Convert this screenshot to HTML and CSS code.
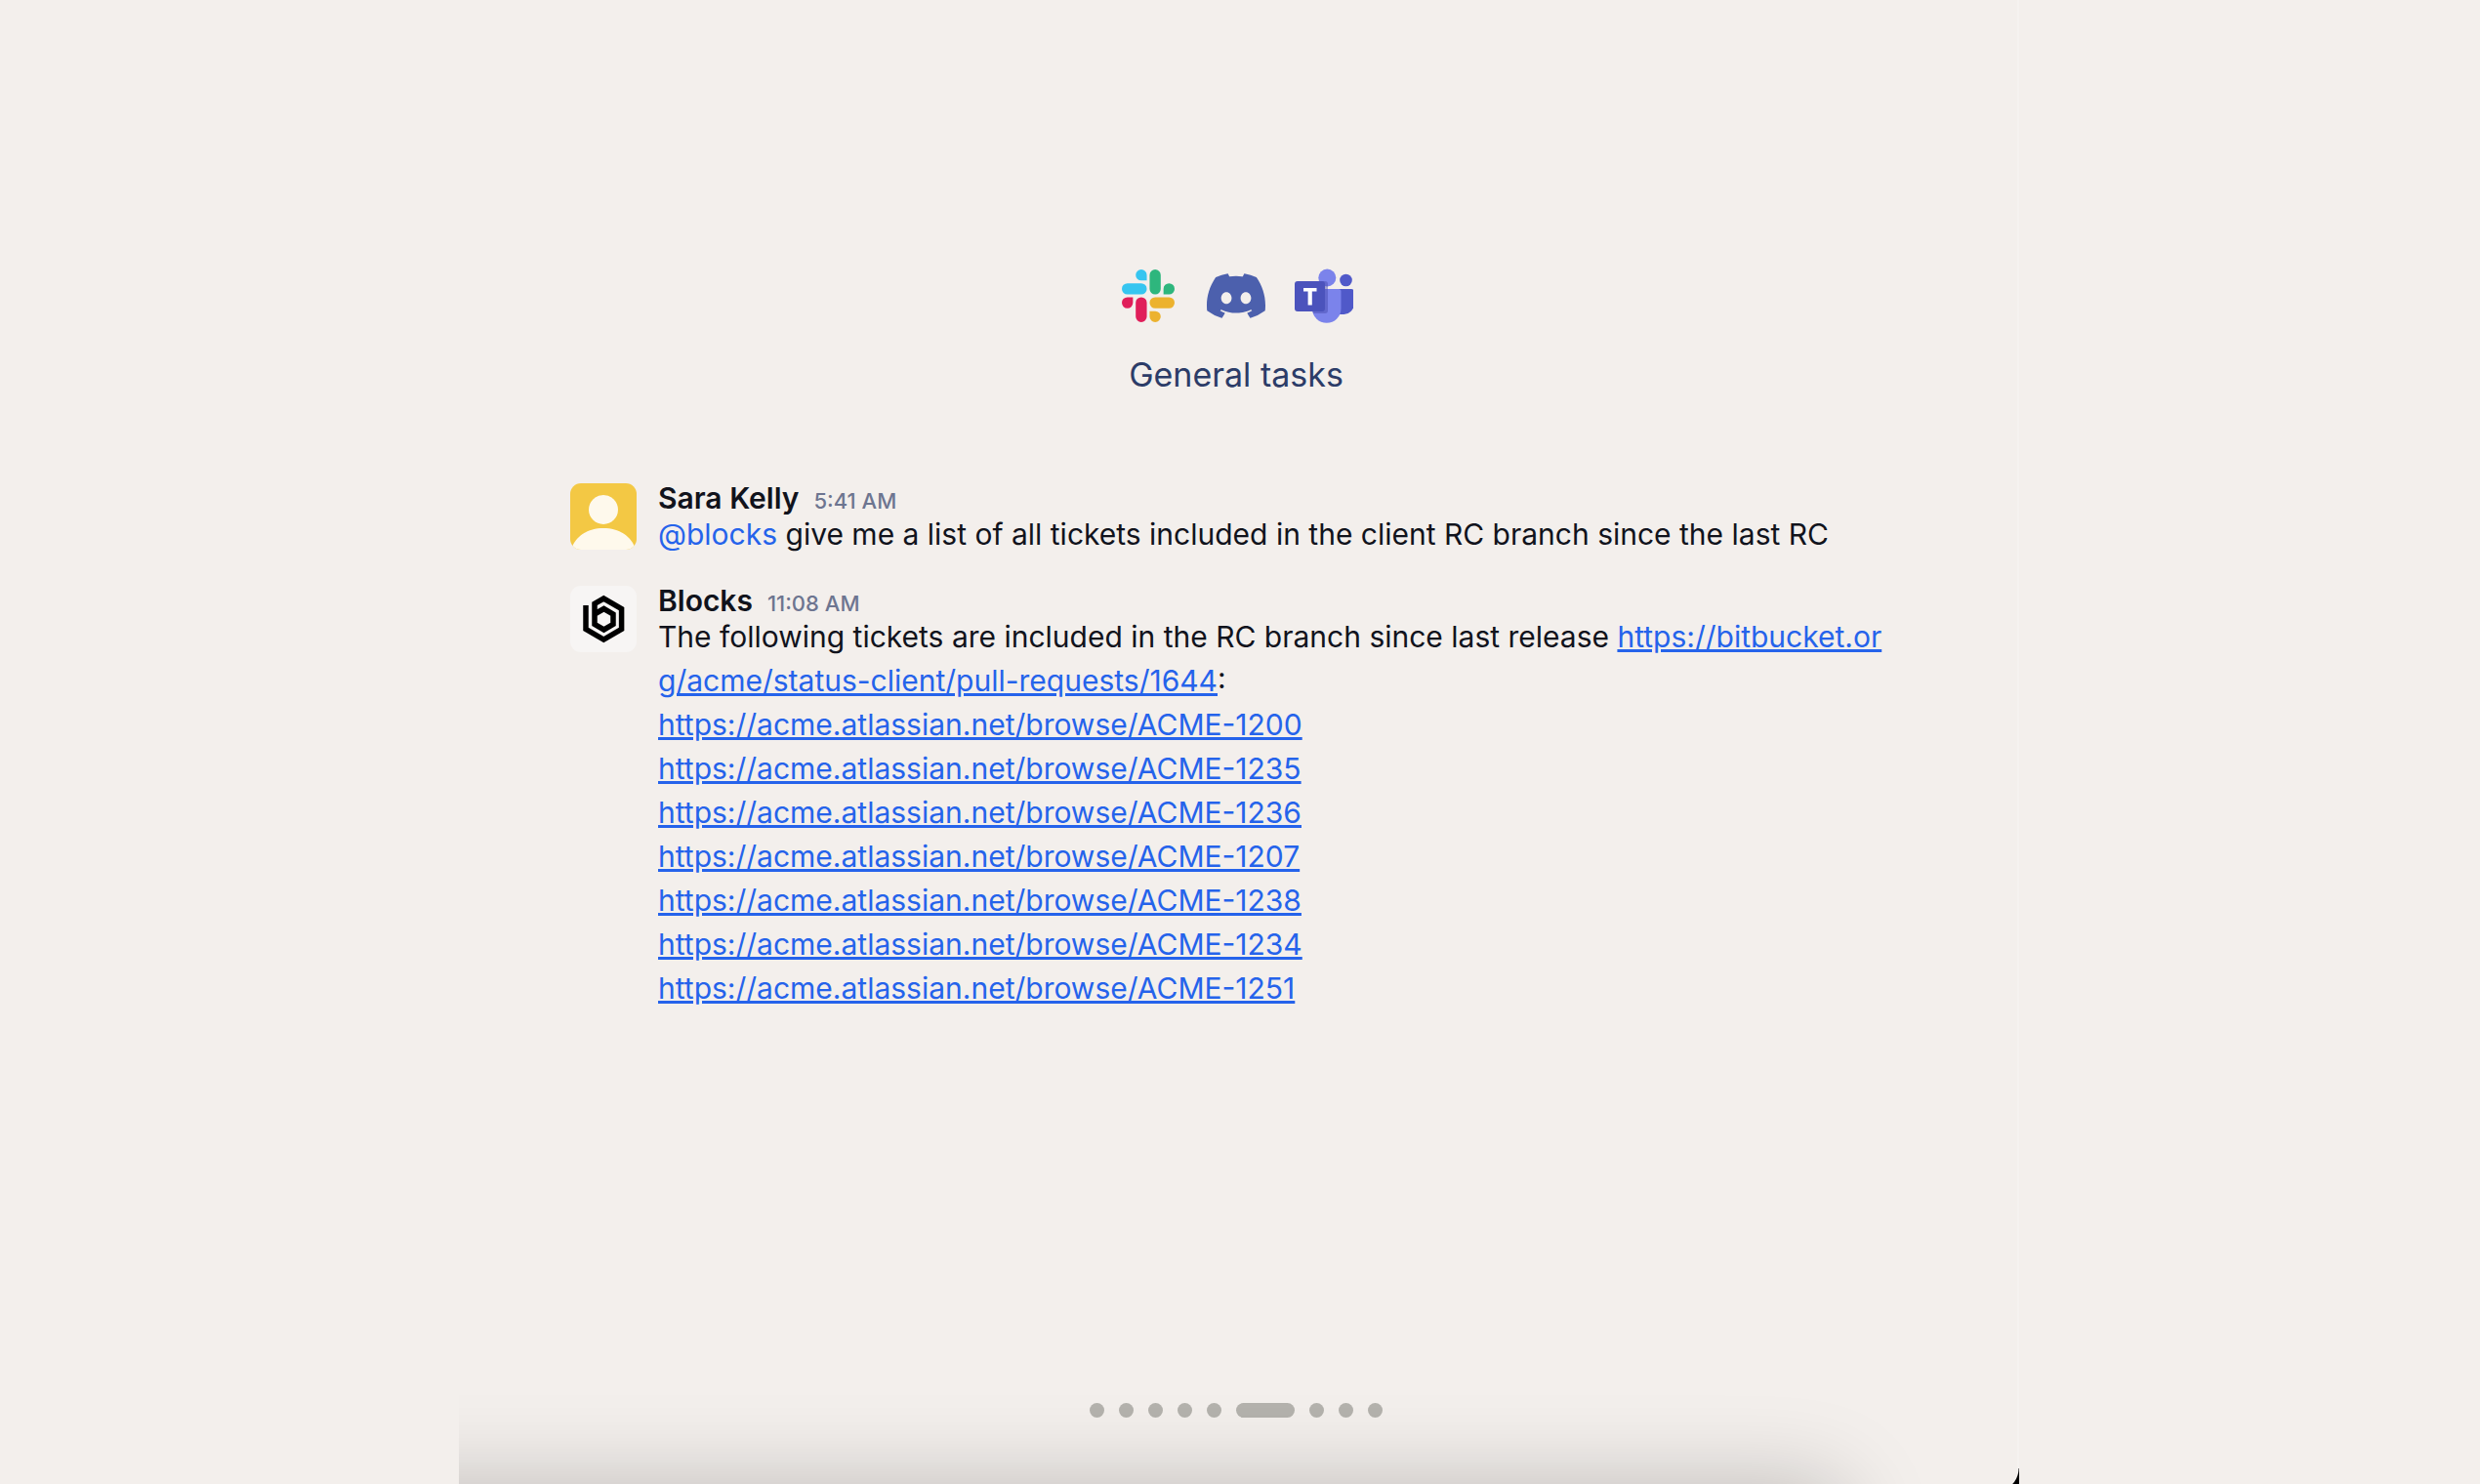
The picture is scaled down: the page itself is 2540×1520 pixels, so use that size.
FILE: index.html
```html
<!DOCTYPE html>
<html lang="en">
<head>
<meta charset="utf-8">
<title>General tasks</title>
<link rel="stylesheet" href="styles.css">
</head>
<body>
<main class="panel">
  <header class="intro">
    <div class="apps">
      <svg class="app" viewBox="0 0 60 60" role="img" aria-label="Slack">
        <g transform="translate(3 3) scale(2.25)">
          <path fill="#e01e5a" d="M5.042 15.165a2.528 2.528 0 0 1-2.52 2.523A2.528 2.528 0 0 1 0 15.165a2.527 2.527 0 0 1 2.522-2.52h2.52v2.52zM6.313 15.165a2.527 2.527 0 0 1 2.521-2.52 2.527 2.527 0 0 1 2.521 2.52v6.313A2.528 2.528 0 0 1 8.834 24a2.528 2.528 0 0 1-2.521-2.522v-6.313z"/>
          <path fill="#36c5f0" d="M8.834 5.042a2.528 2.528 0 0 1-2.521-2.52A2.528 2.528 0 0 1 8.834 0a2.528 2.528 0 0 1 2.521 2.522v2.52H8.834zM8.834 6.313a2.528 2.528 0 0 1 2.521 2.521 2.528 2.528 0 0 1-2.521 2.521H2.522A2.528 2.528 0 0 1 0 8.834a2.528 2.528 0 0 1 2.522-2.521h6.312z"/>
          <path fill="#2eb67d" d="M18.956 8.834a2.528 2.528 0 0 1 2.522-2.521A2.528 2.528 0 0 1 24 8.834a2.528 2.528 0 0 1-2.522 2.521h-2.522V8.834zM17.688 8.834a2.528 2.528 0 0 1-2.523 2.521 2.527 2.527 0 0 1-2.52-2.521V2.522A2.527 2.527 0 0 1 15.165 0a2.528 2.528 0 0 1 2.523 2.522v6.312z"/>
          <path fill="#ecb22e" d="M15.165 18.956a2.528 2.528 0 0 1 2.523 2.522A2.528 2.528 0 0 1 15.165 24a2.527 2.527 0 0 1-2.52-2.522v-2.522h2.52zM15.165 17.688a2.527 2.527 0 0 1-2.52-2.523 2.526 2.526 0 0 1 2.52-2.52h6.313A2.527 2.527 0 0 1 24 15.165a2.528 2.528 0 0 1-2.522 2.523h-6.313z"/>
        </g>
      </svg>
      <svg class="app" viewBox="0 0 24 24" role="img" aria-label="Discord">
        <path fill="#4c60ad" d="M20.317 4.37a19.791 19.791 0 0 0-4.885-1.515.074.074 0 0 0-.079.037c-.21.375-.444.864-.608 1.25a18.27 18.27 0 0 0-5.487 0 12.64 12.64 0 0 0-.617-1.25.077.077 0 0 0-.079-.037A19.736 19.736 0 0 0 3.677 4.37a.07.07 0 0 0-.032.027C.533 9.046-.32 13.58.099 18.057a.082.082 0 0 0 .031.057 19.9 19.9 0 0 0 5.993 3.03.078.078 0 0 0 .084-.028 14.09 14.09 0 0 0 1.226-1.994.076.076 0 0 0-.041-.106 13.107 13.107 0 0 1-1.872-.892.077.077 0 0 1-.008-.128 10.2 10.2 0 0 0 .372-.292.074.074 0 0 1 .077-.01c3.928 1.793 8.18 1.793 12.062 0a.074.074 0 0 1 .078.01c.12.098.246.198.373.292a.077.077 0 0 1-.006.127 12.299 12.299 0 0 1-1.873.892.077.077 0 0 0-.041.107c.36.698.772 1.362 1.225 1.993a.076.076 0 0 0 .084.028 19.839 19.839 0 0 0 6.002-3.03.077.077 0 0 0 .032-.054c.5-5.177-.838-9.674-3.549-13.66a.061.061 0 0 0-.031-.03zM8.02 15.33c-1.183 0-2.157-1.085-2.157-2.419 0-1.333.956-2.419 2.157-2.419 1.21 0 2.176 1.096 2.157 2.42 0 1.333-.956 2.418-2.157 2.418zm7.975 0c-1.183 0-2.157-1.085-2.157-2.419 0-1.333.955-2.419 2.157-2.419 1.21 0 2.176 1.096 2.157 2.42 0 1.333-.946 2.418-2.157 2.418z"/>
      </svg>
      <svg class="app" viewBox="0 0 60 60" role="img" aria-label="Microsoft Teams">
        <circle cx="52.500" cy="14" r="6.300" fill="#5059c9"/>
        <path fill="#5059c9" d="M44 23h14a2.500 2.500 0 0 1 2.500 2.500V39a10 10 0 0 1-10 10H44z"/>
        <circle cx="33.300" cy="11.500" r="9" fill="#7b83eb"/>
        <path fill="#7b83eb" d="M18 23h27a2.500 2.500 0 0 1 2.500 2.500V43a14.700 14.700 0 0 1-29.500 0z"/>
        <path fill="#4448a8" opacity=".45" d="M18 15h13a3 3 0 0 1 3 3v27a3 3 0 0 1-3 3H19a15 15 0 0 1-1-5z"/>
        <rect y="15" width="31" height="31" rx="3" fill="#4b53bc"/>
        <path fill="#fff" d="M9 22h13.500v3.600h-4.700V39.500h-4.200V25.600H9z"/>
      </svg>
    </div>
    <h1 class="title">General tasks</h1>
  </header>

  <section class="messages">
    <article class="message">
      <svg class="avatar" viewBox="0 0 68 68" aria-hidden="true">
        <rect width="68" height="68" fill="#f3c844"/>
        <circle cx="34" cy="27" r="15" fill="#fef9ec"/>
        <path fill="#fef9ec" d="M1 68C5 54 18 46 34 46s29 8 33 22z"/>
      </svg>
      <div class="content">
        <div class="meta"><h2 class="name">Sara Kelly</h2><time class="time">5:41 AM</time></div>
        <p class="text"><span class="mention">@blocks</span> give me a list of all tickets included in the client RC branch since the last RC</p>
      </div>
    </article>
    <article class="message">
      <svg class="avatar" viewBox="0 0 68 68" aria-hidden="true">
        <rect width="68" height="68" fill="#f7f5f4"/>
        <path fill="none" stroke="#000" stroke-width="5.500" d="M16 20v24.300L34.300 55l18.300-10.700V23.600L34.300 13 25 18.400v21.100L34.500 45l9.500-5.500V29l-9.500-5.500L25 29"/>
      </svg>
      <div class="content">
        <div class="meta"><h2 class="name">Blocks</h2><time class="time">11:08 AM</time></div>
        <p class="text">The following tickets are included in the RC branch since last release <a class="long" href="#">https://bitbucket.org/acme/status-client/pull-requests/1644</a>:</p>
        <ul class="tickets">
          <li><a href="#">https://acme.atlassian.net/browse/ACME-1200</a></li>
          <li><a href="#">https://acme.atlassian.net/browse/ACME-1235</a></li>
          <li><a href="#">https://acme.atlassian.net/browse/ACME-1236</a></li>
          <li><a href="#">https://acme.atlassian.net/browse/ACME-1207</a></li>
          <li><a href="#">https://acme.atlassian.net/browse/ACME-1238</a></li>
          <li><a href="#">https://acme.atlassian.net/browse/ACME-1234</a></li>
          <li><a href="#">https://acme.atlassian.net/browse/ACME-1251</a></li>
        </ul>
      </div>
    </article>
  </section>

  <nav class="dots" aria-label="Slides">
    <button class="dot" aria-label="Slide 1"></button>
    <button class="dot" aria-label="Slide 2"></button>
    <button class="dot" aria-label="Slide 3"></button>
    <button class="dot" aria-label="Slide 4"></button>
    <button class="dot" aria-label="Slide 5"></button>
    <button class="dot active" aria-label="Slide 6" aria-current="true"></button>
    <button class="dot" aria-label="Slide 7"></button>
    <button class="dot" aria-label="Slide 8"></button>
    <button class="dot" aria-label="Slide 9"></button>
  </nav>
</main>
</body>
</html>
```

FILE: styles.css
```css
* {
  box-sizing: border-box;
}

body {
  margin: 0;
  padding-right: 2px;
  background: #f3efec;
  color: #11131c;
  font-family: Inter, "Liberation Sans", sans-serif;
  font-size: 30px;
  line-height: 45px;
}

h1,
h2,
p,
ul {
  margin: 0;
  padding: 0;
}

.panel {
  position: relative;
  display: flex;
  flex-direction: column;
  max-width: 1598px;
  min-height: 100vh;
  margin: 0 auto;
  padding: 273px 120px 68px 114px;
  box-shadow: inset -2px 0 #f5f2f0;
  overflow: hidden;
}

.panel::before {
  content: "";
  position: absolute;
  top: 100%;
  left: -200px;
  right: 180px;
  height: 300px;
  border-radius: 24px;
  box-shadow: 0 0 90px rgba(0, 0, 0, 0.22);
}

/* rounded lower corner */
.panel::after {
  content: "";
  position: absolute;
  right: 0;
  bottom: -8px;
  width: 24px;
  height: 24px;
  background: radial-gradient(circle at 0 0, transparent 23px, #000 24px);
}

.intro {
  display: flex;
  flex-direction: column;
  align-items: center;
  gap: 28px;
}

.apps {
  display: flex;
  gap: 30px;
}

.app {
  width: 60px;
  height: 60px;
}

.title {
  color: #2c3c68;
  font-size: 34px;
  font-weight: 400;
  line-height: 45px;
}

.messages {
  display: flex;
  flex-direction: column;
  gap: 30px;
  margin-top: 89px;
}

.message {
  display: flex;
  align-items: flex-start;
  gap: 22px;
}

.avatar {
  flex: none;
  width: 68px;
  height: 68px;
  border-radius: 11px;
}

.content {
  flex: 1;
  min-width: 0;
  padding-top: 3px;
}

.meta {
  display: flex;
  align-items: baseline;
  gap: 15px;
  line-height: 24px;
}

.name {
  font-size: 30px;
  font-weight: 600;
}

.time {
  color: #6d7590;
  font-size: 22px;
  font-weight: 500;
}

.mention,
a {
  color: #2563eb;
}

a {
  text-decoration-thickness: 3px;
}

.long {
  word-break: break-all;
}

.tickets {
  list-style: none;
}

.dots {
  display: flex;
  justify-content: center;
  gap: 15px;
  margin-top: auto;
}

.dot {
  width: 15px;
  height: 15px;
  padding: 0;
  border: 0;
  border-radius: 8px;
  background: #b4b2ad;
}

.active {
  width: 60px;
}
```
